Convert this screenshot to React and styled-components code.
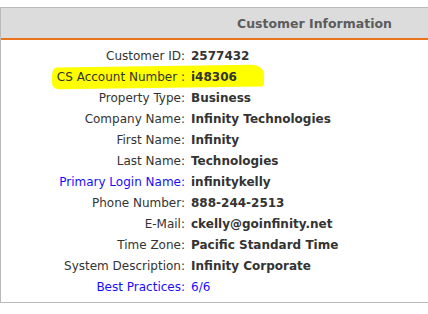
import React from 'react';
import styled, { createGlobalStyle } from 'styled-components';

const GlobalStyle = createGlobalStyle`
    body {
        margin: 0;
        background: white;
        font-family: "DejaVu Sans", Verdana, sans-serif;
    }
`

const Panel = styled.div`
    margin-top: 7px;
    width: 440px;
    border: 1px solid #b9b9b9;
    border-right: none;
    background: white;
    height: 296px;
    box-sizing: border-box;
`

const Header = styled.div`
    height: 30px;
    background: #dcdcdc;
    border-bottom: 2px solid #e8741e;
    display: flex;
    align-items: center;
    justify-content: flex-end;
    padding-right: 48px;
    color: #5c5c5c;
    font-size: 12.5px;
    font-weight: bold;
`

const Body = styled.div`
    padding-top: 5px;
    display: flex;
    flex-direction: column;
`

const Row = styled.div`
    display: grid;
    grid-template-columns: 184px auto;
    column-gap: 6px;
    height: 21px;
    align-items: center;
    font-size: 12px;
    color: #333;
`

const Label = styled.span`
    text-align: right;
    white-space: nowrap;
    color: ${p => (p.$link ? '#1a0dff' : '#333')};
`

const Value = styled.span`
    white-space: nowrap;
    font-weight: ${p => (p.$plain ? 'normal' : 'bold')};
    color: ${p => (p.$link ? '#1a0dff' : '#333')};
`

const Highlight = styled.div`
    position: relative;
    &::before {
        content: '';
        position: absolute;
        left: 51px;
        top: 0px;
        width: 212px;
        height: 22px;
        background: #ffff00;
        border-radius: 5px 12px 3px 8px / 8px 10px 4px 6px;
        transform: rotate(-0.8deg);
    }
    & > * {
        position: relative;
    }
`

const rows = [
    { label: 'Customer ID:', value: '2577432' },
    { label: 'CS Account Number :', value: 'i48306', hl: true },
    { label: 'Property Type:', value: 'Business' },
    { label: 'Company Name:', value: 'Infinity Technologies' },
    { label: 'First Name:', value: 'Infinity' },
    { label: 'Last Name:', value: 'Technologies' },
    { label: 'Primary Login Name:', value: 'infinitykelly', link: true },
    { label: 'Phone Number:', value: '888-244-2513' },
    { label: 'E-Mail:', value: 'ckelly@goinfinity.net' },
    { label: 'Time Zone:', value: 'Pacific Standard Time' },
    { label: 'System Description:', value: 'Infinity Corporate' },
    { label: 'Best Practices:', value: '6/6', link: true, plainLink: true },
]

function InfoRow({ r }) {
    const content = (
        <Row>
            <Label $link={r.link}>{r.label}</Label>
            <Value $plain={r.plainLink} $link={r.plainLink}>{r.value}</Value>
        </Row>
    )
    if (r.hl) return <Highlight>{content}</Highlight>
    return content
}

export default function App() {
    return (
        <>
            <GlobalStyle />
            <Panel>
                <Header>Customer Information</Header>
                <Body>
                    {rows.map(r => <InfoRow key={r.label} r={r} />)}
                </Body>
            </Panel>
        </>
    )
}
